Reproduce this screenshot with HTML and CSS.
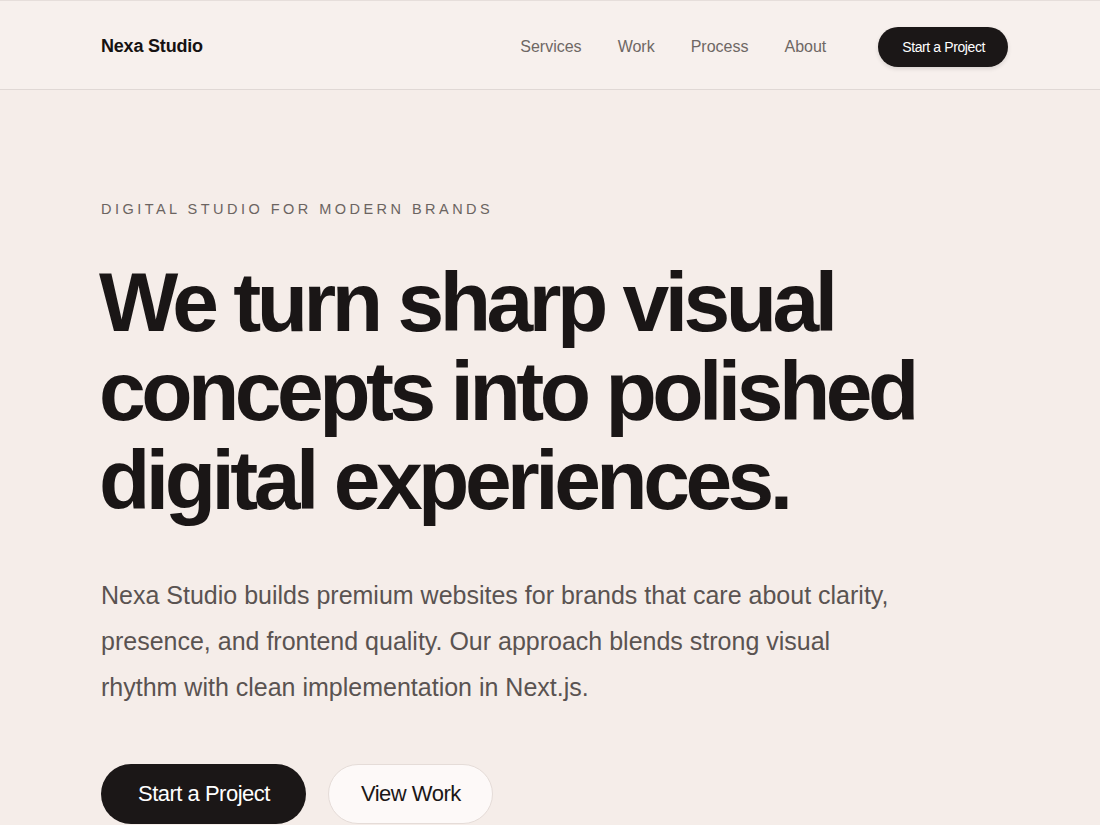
FILE: index.html
```html
<!DOCTYPE html>
<html lang="en">
<head>
<meta charset="utf-8">
<title>Nexa Studio</title>
<link rel="stylesheet" href="styles.css">
</head>
<body>
<header class="site-header">
  <div class="header-inner">
    <a class="brand" href="#">Nexa Studio</a>
    <nav class="nav">
      <a href="#">Services</a>
      <a href="#">Work</a>
      <a href="#">Process</a>
      <a href="#">About</a>
      <a class="nav-cta" href="#">Start a Project</a>
    </nav>
  </div>
</header>
<main class="hero">
  <p class="eyebrow">DIGITAL STUDIO FOR MODERN BRANDS</p>
  <h1 class="headline">We turn sharp visual<br>concepts into polished<br>digital experiences.</h1>
  <p class="lead">Nexa Studio builds premium websites for brands that care about clarity, presence, and frontend quality. Our approach blends strong visual rhythm with clean implementation in Next.js.</p>
  <div class="actions">
    <a class="btn btn-dark" href="#">Start a Project</a>
    <a class="btn btn-light" href="#">View Work</a>
  </div>
</main>
</body>
</html>
```
FILE: styles.css
```css
* { box-sizing: border-box; }
html, body { margin: 0; padding: 0; }
body {
  background: #f5ede9;
  font-family: "Liberation Sans", Arial, sans-serif;
  color: #1a1616;
  overflow: hidden;
}
a { text-decoration: none; color: inherit; }

.site-header {
  background: #f7f0ed;
  border-top: 1px solid #e6dedb;
  border-bottom: 1px solid #e0d8d5;
}
.header-inner {
  height: 88px;
  padding: 3px 92px 0 101px;
  display: flex;
  align-items: center;
  justify-content: space-between;
}
.brand {
  font-size: 18px;
  font-weight: 700;
  color: #161212;
  letter-spacing: -0.2px;
}
.nav {
  display: flex;
  align-items: center;
  gap: 36px;
  font-size: 16px;
  color: #6e6764;
}
.nav-cta {
  margin-left: 16px;
  background: #1b1717;
  color: #fff;
  font-size: 14px;
  letter-spacing: -0.4px;
  height: 40px;
  padding: 0 23px 0 24px;
  border-radius: 20px;
  display: flex;
  align-items: center;
  box-shadow: 0 2px 4px rgba(0,0,0,0.12);
}

.hero {
  padding: 110px 92px 0 101px;
}
.eyebrow {
  margin: 0;
  font-size: 14.5px;
  letter-spacing: 3.47px;
  color: #6b6461;
  line-height: 18px;
}
.headline {
  margin: 40px 0 0 -2px;
  font-size: 84px;
  line-height: 89px;
  font-weight: 700;
  letter-spacing: -4.5px;
  color: #1a1616;
}
.lead {
  margin: 47px 0 0;
  max-width: 795px;
  font-size: 25px;
  line-height: 46px;
  color: #5a5351;
}
.actions {
  margin-top: 54px;
  display: flex;
  gap: 22px;
}
.btn {
  height: 60px;
  border-radius: 30px;
  display: flex;
  align-items: center;
  font-size: 22px;
  letter-spacing: -0.5px;
}
.btn-dark {
  background: #1b1717;
  color: #fff;
  padding: 0 36px 0 37px;
}
.btn-light {
  background: #fdf9f8;
  color: #1b1717;
  border: 1px solid #e5dcd8;
  padding: 0 31px 0 32px;
}
```
